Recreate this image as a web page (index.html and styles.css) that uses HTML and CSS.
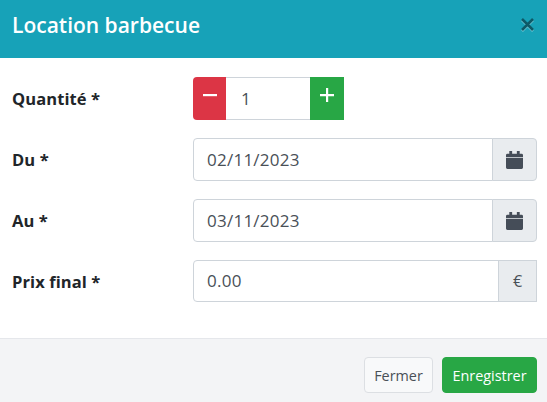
FILE: index.html
```html
<!DOCTYPE html>
<html lang="fr">
<head>
<meta charset="utf-8">
<title>Location barbecue</title>
<link rel="stylesheet" href="styles.css">
</head>
<body>
<div class="modal">
  <header class="modal-header">
    <h1 class="modal-title">Location barbecue</h1>
    <button class="close" aria-label="Fermer"><svg width="13" height="13" viewBox="0 0 13 13"><path d="M1 1L12 12M12 1L1 12" class="close-x"/></svg></button>
  </header>
  <main class="modal-body">
    <div class="row row-qty">
      <label class="label">Quantité *</label>
      <div class="qty">
        <button class="qty-btn minus"><svg width="14" height="14" viewBox="0 0 14 14"><rect x="0" y="6" width="14" height="2.2" class="glyph"/></svg></button>
        <div class="qty-value">1</div>
        <button class="qty-btn plus"><svg width="14" height="14" viewBox="0 0 14 14"><path d="M6 0h2.2v6H14v2.2H8.2V14H6V8.2H0V6h6z" class="glyph"/></svg></button>
      </div>
    </div>
    <div class="row">
      <label class="label">Du *</label>
      <div class="group">
        <div class="input">02/11/2023</div>
        <div class="addon addon-cal"><svg width="17" height="18" viewBox="0 0 18 19"><path class="cal" d="M3.500 0h3v3h5V0h3v3h2A1.500 1.500 0 0 1 18 4.500V6.500H0V4.500A1.500 1.500 0 0 1 1.500 3h2zM0 7.500h18v10a1.500 1.500 0 0 1-1.500 1.500h-15A1.500 1.500 0 0 1 0 17.500z"/></svg></div>
      </div>
    </div>
    <div class="row">
      <label class="label">Au *</label>
      <div class="group">
        <div class="input">03/11/2023</div>
        <div class="addon addon-cal"><svg width="17" height="18" viewBox="0 0 18 19"><path class="cal" d="M3.500 0h3v3h5V0h3v3h2A1.500 1.500 0 0 1 18 4.500V6.500H0V4.500A1.500 1.500 0 0 1 1.500 3h2zM0 7.500h18v10a1.500 1.500 0 0 1-1.500 1.500h-15A1.500 1.500 0 0 1 0 17.500z"/></svg></div>
      </div>
    </div>
    <div class="row">
      <label class="label">Prix final *</label>
      <div class="group group-price">
        <div class="input">0.00</div>
        <div class="addon addon-euro">€</div>
      </div>
    </div>
  </main>
  <footer class="modal-footer">
    <button class="btn btn-light">Fermer</button>
    <button class="btn btn-success">Enregistrer</button>
  </footer>
</div>
</body>
</html>
```
FILE: styles.css
```css
* { box-sizing: border-box; }
html, body { margin: 0; padding: 0; }
body {
  width: 547px;
  height: 402px;
  overflow: hidden;
  background: #fff;
  font-family: "Open Sans", "Noto Sans", sans-serif;
  color: #212529;
}
.modal { display: flex; flex-direction: column; height: 402px; }
.modal-header {
  height: 58px;
  background: #17a2b8;
  display: flex;
  align-items: center;
  justify-content: space-between;
  padding: 0 13px 9px 12px;
}
.modal-title { margin: 0; font-size: 21px; font-weight: 600; color: #fff; }
.close { border: 0; background: none; padding: 0; display: flex; }
.close-x { stroke: #0d5a67; stroke-width: 2.6; fill: none; }
.close svg { filter: drop-shadow(0 1px 0 rgba(255, 255, 255, 0.4)); }
.modal-body {
  height: 280px;
  padding: 19px 10px 0 12px;
  display: flex;
  flex-direction: column;
  gap: 18px;
}
.row { display: flex; align-items: center; height: 43px; }
.label { width: 181px; font-size: 16.5px; font-weight: 700; letter-spacing: 0.1px; }
.qty { display: flex; width: 151px; height: 43px; }
.qty-btn {
  border: 0;
  padding: 0 0 8px;
  display: flex;
  align-items: center;
  justify-content: center;
}
.glyph { fill: #fff; }
.minus { width: 33px; background: #dc3545; border-radius: 4px 0 0 4px; }
.plus { width: 34px; background: #28a745; }
.qty-value {
  flex: 1;
  border-top: 1px solid #ced4da;
  border-bottom: 1px solid #ced4da;
  padding-left: 15px;
  font-size: 17px;
  line-height: 41px;
  color: #495057;
}
.group { display: flex; width: 344px; height: 43px; }
.group-price { height: 42px; align-self: flex-start; }
.input {
  flex: 1;
  border: 1px solid #ced4da;
  border-radius: 4px 0 0 4px;
  padding-left: 13px;
  font-size: 17px;
  letter-spacing: 0.25px;
  line-height: 41px;
  color: #495057;
}
.group-price .input { line-height: 40px; }
.addon {
  margin-left: -1px;
  border: 1px solid #ced4da;
  background: #e9ecef;
  border-radius: 0 4px 4px 0;
  display: flex;
  align-items: center;
  justify-content: center;
  color: #495057;
}
.addon-cal { width: 45px; }
.addon-euro { width: 39px; font-size: 16px; border-radius: 0; }
.cal { fill: #454d58; }
.modal-footer {
  flex: 1;
  background: #f3f4f6;
  border-top: 1px solid #e5e7eb;
  display: flex;
  justify-content: flex-end;
  align-items: flex-start;
  gap: 9px;
  padding: 18px 10px 0 0;
}
.btn {
  height: 36px;
  border-radius: 4px;
  font-family: inherit;
  font-size: 14.4px;
  padding: 0;
}
.btn-light { width: 69px; background: #f8f9fa; border: 1px solid #dcdfe3; color: #495057; }
.btn-success { width: 95px; background: #28a745; border: 1px solid #28a745; color: #fff; }
```
